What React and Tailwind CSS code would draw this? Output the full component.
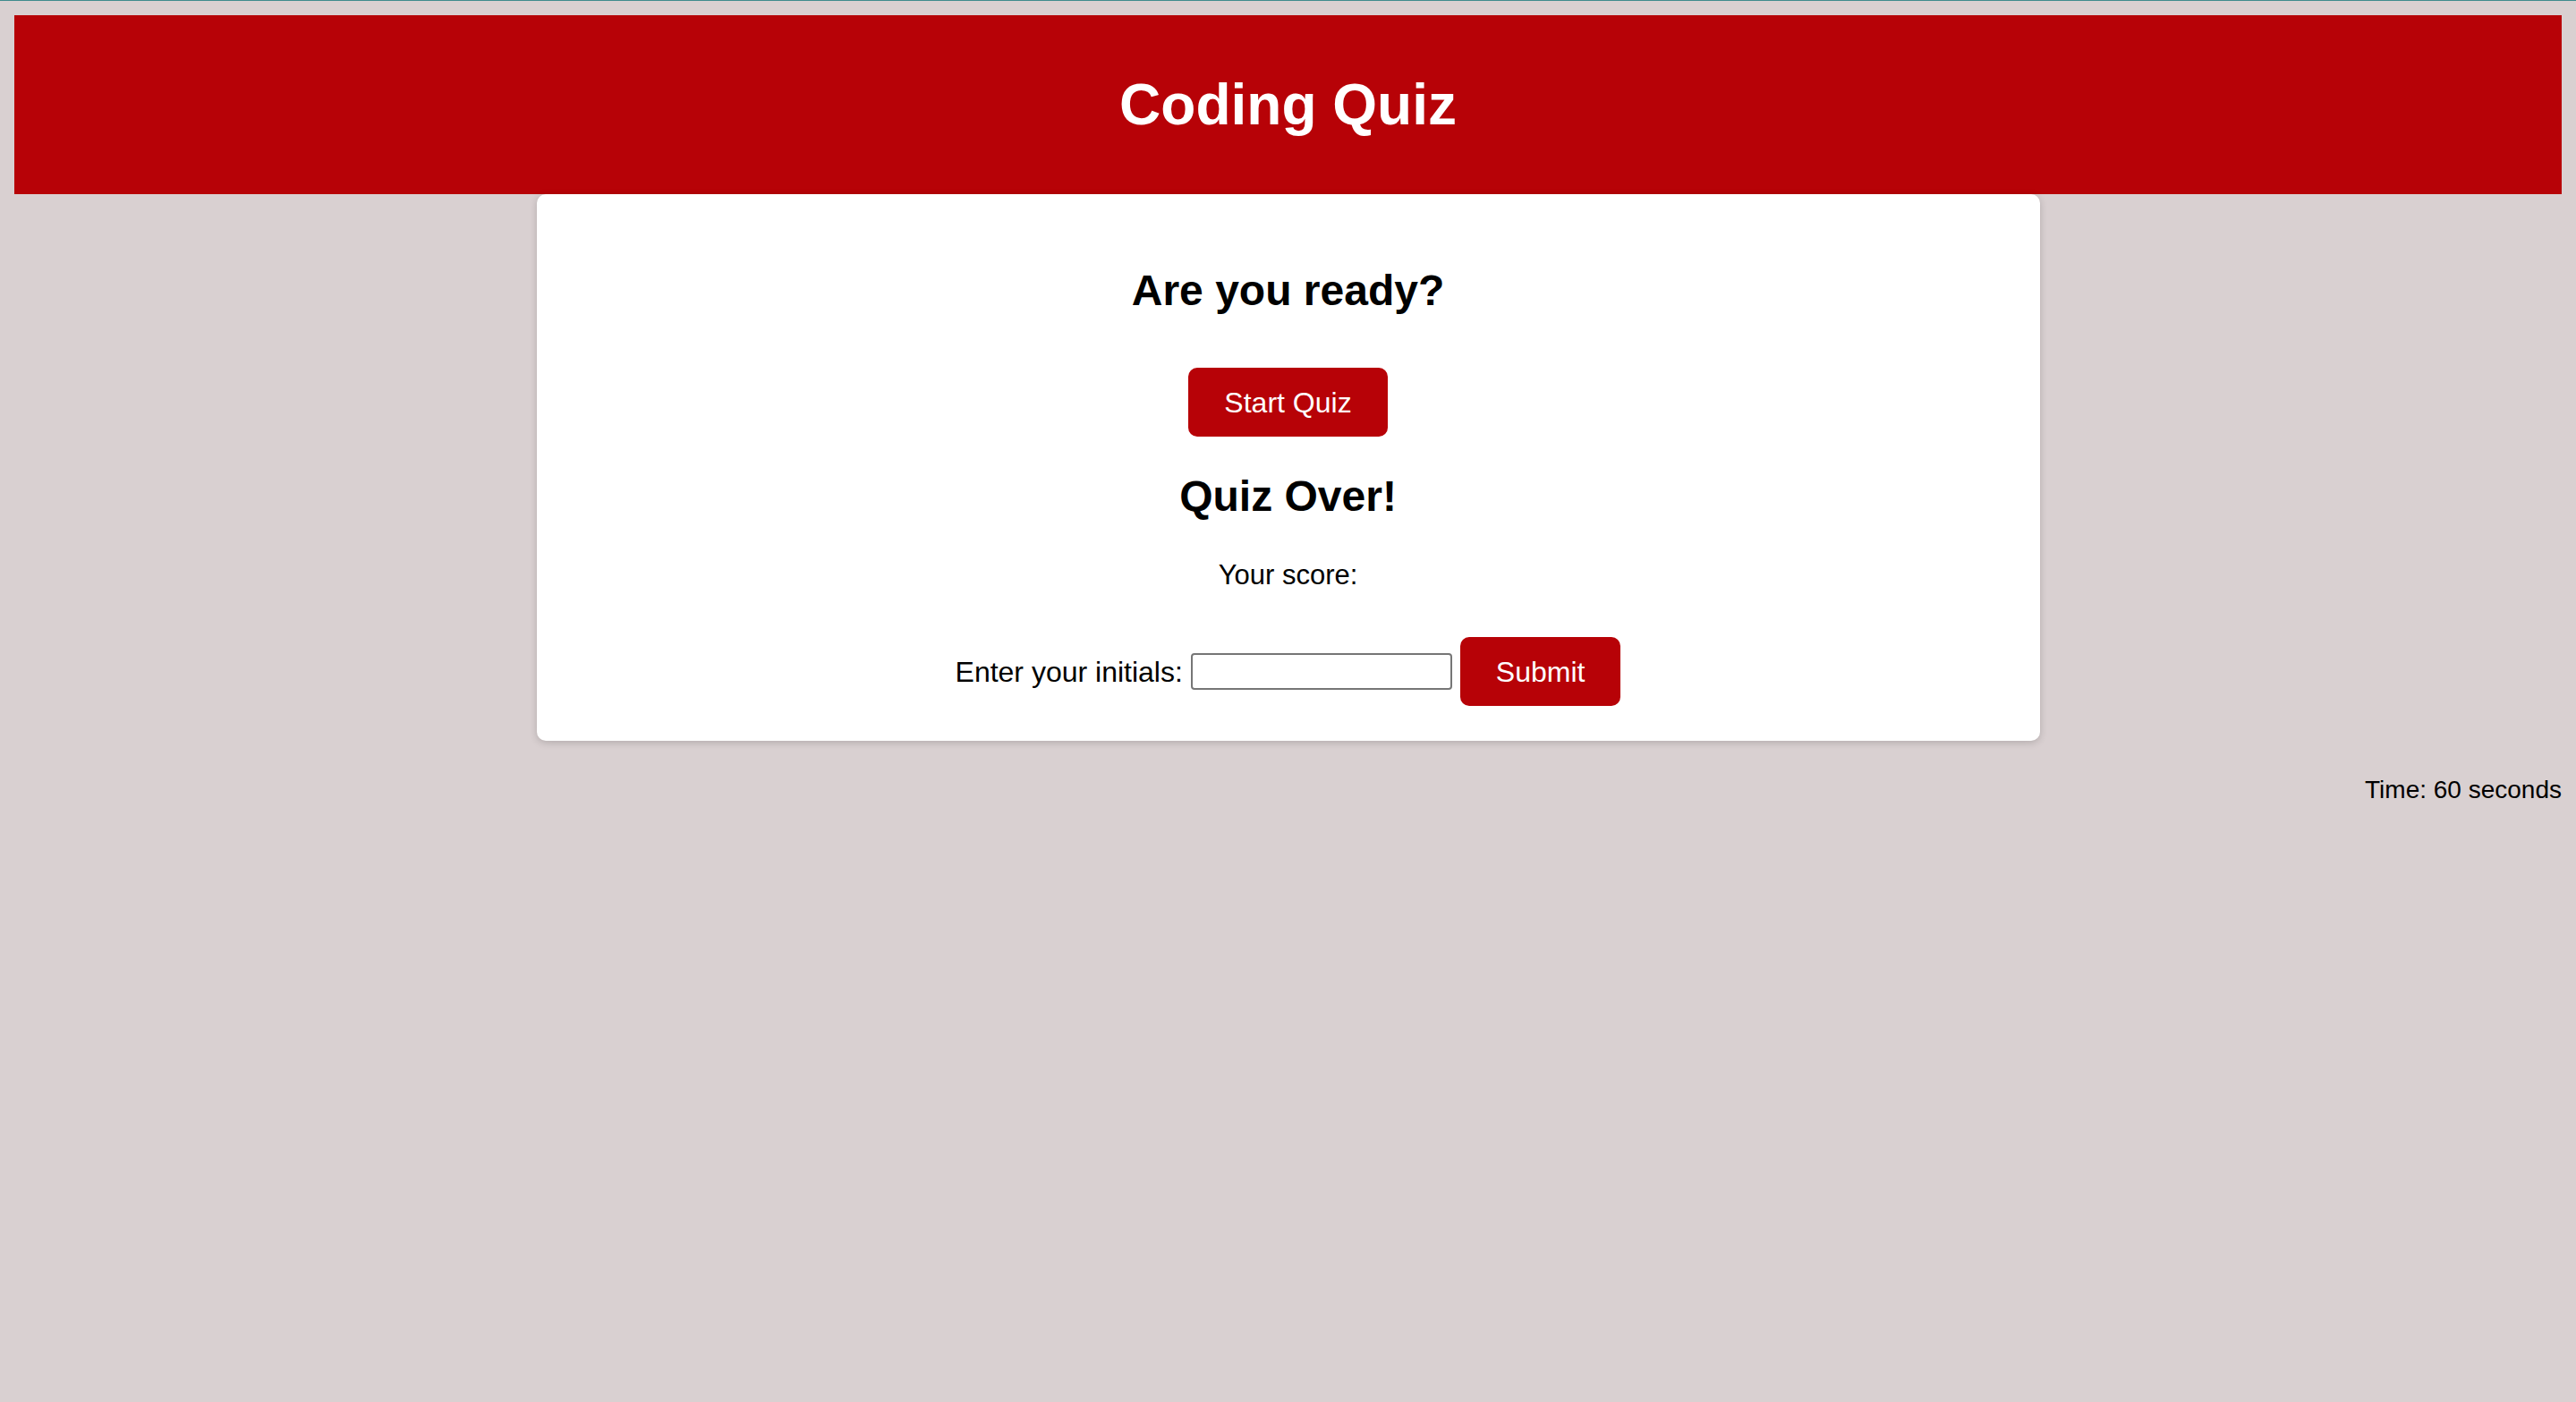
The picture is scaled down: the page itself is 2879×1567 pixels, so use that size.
import { useState } from "react";

const font = { fontFamily: '"Liberation Sans", Arial, sans-serif' };

export default function App() {
  const [initials, setInitials] = useState("");
  const [time] = useState(60);

  return (
    <div className="min-h-screen w-full bg-[#d9d0d1] text-black" style={font}>
      {/* thin browser tint line at the very top */}
      <div className="h-px w-full bg-[#3f8b8d]" />

      <div className="px-[16px] pt-[16px]">
        {/* Header */}
        <header className="flex h-[200px] items-center justify-center bg-[#b70207]">
          <h1 className="text-[64px] font-bold leading-none text-white">Coding Quiz</h1>
        </header>

        {/* Quiz card */}
        <main className="mx-auto flex w-[1680px] flex-col items-center rounded-[10px] bg-white pt-[84px] pb-[39px] shadow-[0_2px_8px_rgba(0,0,0,0.18)]">
          <h2 className="text-[48px] font-bold leading-none">Are you ready?</h2>

          <button className="mt-[62px] h-[77px] rounded-[10px] bg-[#b70207] px-[40px] text-[32px] leading-none text-white">
            Start Quiz
          </button>

          <h2 className="mt-[43px] text-[48px] font-bold leading-none">Quiz Over!</h2>

          <p className="mt-[48px] text-[31px] leading-none">Your score:</p>

          <div className="mt-[54px] flex items-center justify-center gap-[9px]">
            <label htmlFor="initials" className="text-[32px] leading-none">
              Enter your initials:
            </label>
            <input
              id="initials"
              value={initials}
              onChange={(e) => setInitials(e.target.value)}
              className="h-[41px] w-[292px] rounded-[4px] border-2 border-[#767676] bg-white px-2 text-[28px] outline-none"
            />
            <button className="h-[77px] rounded-[10px] bg-[#b70207] px-[40px] text-[32px] leading-none text-white">
              Submit
            </button>
          </div>
        </main>

        {/* Timer */}
        <div className="mt-[41px] text-right text-[28px] leading-none">Time: {time} seconds</div>
      </div>
    </div>
  );
}
